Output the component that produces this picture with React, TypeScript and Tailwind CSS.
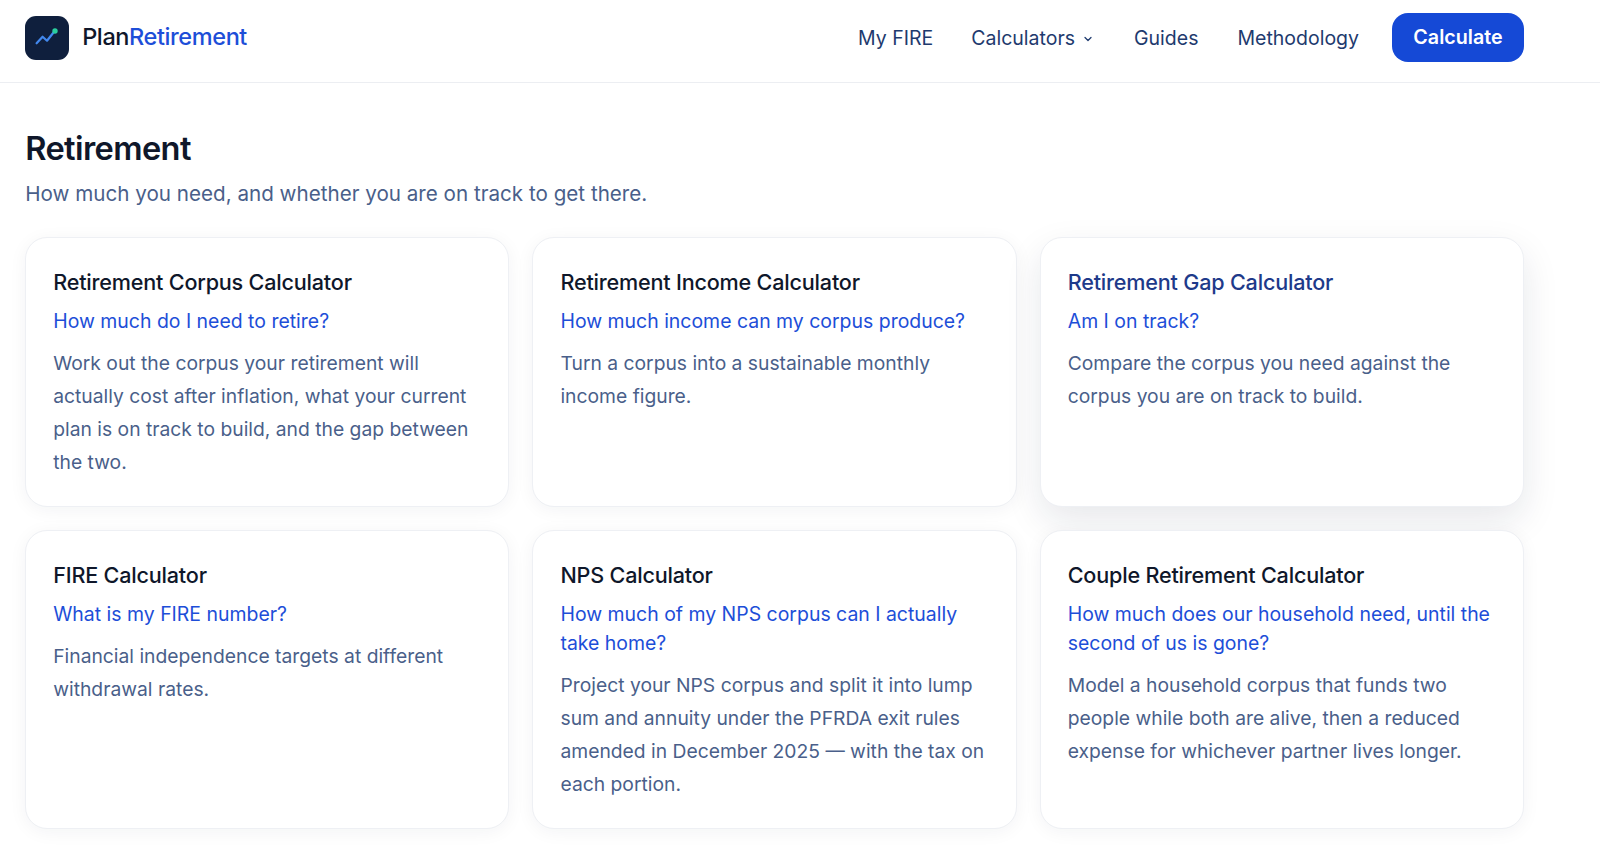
import { ChevronDown } from "lucide-react";

const CARDS = [
  {
    title: "Retirement Corpus Calculator",
    question: "How much do I need to retire?",
    body: "Work out the corpus your retirement will actually cost after inflation, what your current plan is on track to build, and the gap between the two.",
  },
  {
    title: "Retirement Income Calculator",
    question: "How much income can my corpus produce?",
    body: "Turn a corpus into a sustainable monthly income figure.",
  },
  {
    title: "Retirement Gap Calculator",
    question: "Am I on track?",
    body: "Compare the corpus you need against the corpus you are on track to build.",
    hovered: true,
  },
  {
    title: "FIRE Calculator",
    question: "What is my FIRE number?",
    body: "Financial independence targets at different withdrawal rates.",
  },
  {
    title: "NPS Calculator",
    question: "How much of my NPS corpus can I actually take home?",
    body: "Project your NPS corpus and split it into lump sum and annuity under the PFRDA exit rules amended in December 2025 — with the tax on each portion.",
  },
  {
    title: "Couple Retirement Calculator",
    question: "How much does our household need, until the second of us is gone?",
    body: "Model a household corpus that funds two people while both are alive, then a reduced expense for whichever partner lives longer.",
  },
];

function Logo() {
  return (
    <div className="h-[44px] w-[44px] rounded-[11px] bg-[#0f1f3d]">
      <svg width="44" height="44" viewBox="0 0 44 44" fill="none">
        <path
          d="M11.600 27.300L17.600 20.700L22 24.700L29.300 15.500"
          stroke="#4288ee"
          strokeWidth="2.200"
          strokeLinecap="round"
          strokeLinejoin="round"
        />
        <circle cx="30" cy="15" r="2.700" fill="#2bcf9f" />
      </svg>
    </div>
  );
}

function Header() {
  return (
    <header className="h-[83px] border-b border-[#eceef2] bg-white">
      <div className="flex h-[75px] w-[1524px] items-center justify-between pl-[25.200px]">
        <div className="flex items-center gap-[13px]">
          <Logo />
          <span className="mb-[2px] text-[23.500px] font-medium tracking-[-0.4px] text-[#0f172a]">
            Plan<span className="text-[#1d4ed8]">Retirement</span>
          </span>
        </div>
        <nav className="flex items-center text-[19.500px] text-[#1e3a6e]">
          <a className="mt-[3px] mr-[38px]">My FIRE</a>
          <a className="mt-[3px] mr-[40px] flex items-center gap-[7px]">
            Calculators
            <ChevronDown className="h-[12px] w-[12px]" strokeWidth={2.500} />
          </a>
          <a className="mt-[3px] mr-[39px]">Guides</a>
          <a className="mt-[3px] mr-[33px]">Methodology</a>
          <button className="h-[49px] w-[132px] rounded-[16px] bg-[#1549d6] text-[19.700px] font-semibold text-white">
            Calculate
          </button>
        </nav>
      </div>
    </header>
  );
}

function Card({ title, question, body, hovered }: (typeof CARDS)[number]) {
  return (
    <div
      className={`rounded-[22px] border border-[#eef0f4] bg-white px-[27px] pt-[29px] pb-[27px] ${
        hovered
          ? "shadow-[0_14px_36px_rgba(15,31,61,0.1)]"
          : "shadow-[0_3px_18px_rgba(15,31,61,0.05)]"
      }`}
    >
      <h3
        className={`text-[21.600px] leading-[30px] font-medium tracking-[-0.2px] ${
          hovered ? "text-[#1e3a8a]" : "text-[#0f172a]"
        }`}
      >
        {title}
      </h3>
      <p className="mt-[9.800px] text-[19.460px] leading-[29.500px] text-[#1d4ed8]">{question}</p>
      <p className="mt-[10.700px] text-[19.300px] leading-[33px] text-[#4a5f8a]">{body}</p>
    </div>
  );
}

export default function App() {
  return (
    <div className="h-[845px] overflow-hidden bg-white font-['Inter',sans-serif]">
      <Header />
      <main className="w-[1524px] pt-[43px] pl-[25.200px]">
        <h1 className="text-[32.600px] leading-[44px] font-semibold tracking-[-0.6px] text-[#0f172a]">
          Retirement
        </h1>
        <p className="mt-[6.500px] text-[20.630px] leading-[34px] text-[#4a5f8a]">
          How much you need, and whether you are on track to get there.
        </p>
        <div className="mt-[26.500px] grid grid-cols-3 gap-[23px]">
          {CARDS.map((card) => (
            <Card key={card.title} {...card} />
          ))}
        </div>
      </main>
    </div>
  );
}
